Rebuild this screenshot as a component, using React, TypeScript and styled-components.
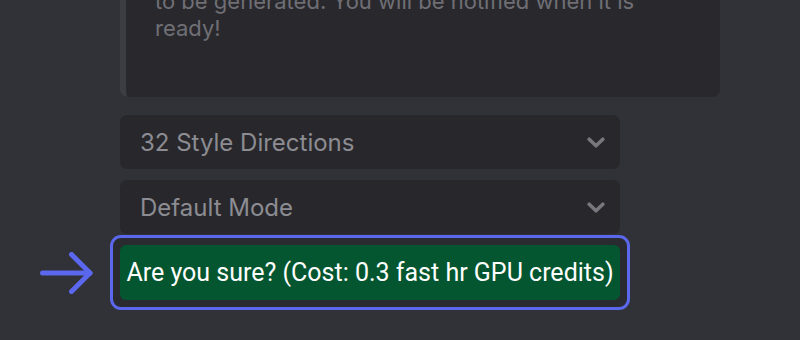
import React from "react";
import styled, { createGlobalStyle } from "styled-components";

const Global = createGlobalStyle`
  html, body {
    margin: 0;
    padding: 0;
    background: #313238;
    overflow: hidden;
  }
  body {
    width: 800px;
    height: 340px;
    font-family: Inter, "Noto Sans", sans-serif;
  }
`;

const Page = styled.div`
  width: 800px;
  height: 340px;
  overflow: hidden;
  background: #313238;
`;

const Column = styled.div`
  margin-left: 120px;
  width: 600px;
  display: flex;
  flex-direction: column;
`;

const NoticePanel = styled.div`
  margin-top: -28px;
  box-sizing: border-box;
  width: 600px;
  padding: 16px 40px 55px 29px;
  background: #29292d;
  border-left: 6px solid #3b3d43;
  border-radius: 0 0 8px 8px;
  color: #6f6f75;
  font-size: 22px;
  line-height: 27px;
`;

const Select = styled.div`
  margin-top: ${(p: { $gap: number }) => p.$gap}px;
  box-sizing: border-box;
  width: 500px;
  height: 54px;
  padding: 0 15px 0 20px;
  display: flex;
  align-items: center;
  justify-content: space-between;
  background: #28282c;
  border-radius: 7px;
  color: #8c8c92;
  font-size: 24px;
`;

const ConfirmRow = styled.div`
  margin-top: 1px;
  margin-left: -80px;
  display: flex;
  align-items: center;
  gap: 17px;
`;

const FocusFrame = styled.div`
  padding: 7px;
  border: 3px solid #5b67ec;
  border-radius: 11px;
  background: #2a2b30;
`;

const ConfirmButton = styled.button`
  box-sizing: border-box;
  width: 500px;
  height: 55px;
  border: none;
  border-radius: 6px;
  background: #03562f;
  color: #ffffff;
  font-family: Roboto, "Liberation Sans", sans-serif;
  font-size: 25px;
  padding: 0;
  display: flex;
  align-items: center;
  justify-content: center;
`;

const Chevron = () => (
  <svg width="18" height="11" viewBox="0 0 18 11">
    <polyline
      points="2.2,2.2 9,8.8 15.8,2.2"
      fill="none"
      stroke="#77777d"
      strokeWidth="3.6"
      strokeLinecap="round"
      strokeLinejoin="round"
    />
  </svg>
);

const Arrow = () => (
  <svg width="53" height="42" viewBox="0 0 53 42">
    <g fill="none" stroke="#5b67ec" strokeWidth="5" strokeLinecap="round" strokeLinejoin="round">
      <line x1="2.5" y1="21" x2="50" y2="21" />
      <polyline points="31.5,2.5 50,21 31.5,39.5" />
    </g>
  </svg>
);

export default function App() {
  return (
    <Page>
      <Global />
      <Column>
        <NoticePanel>
          to be generated. You will be notified when it is ready!
        </NoticePanel>
        <Select $gap={18}>
          <span>32 Style Directions</span>
          <Chevron />
        </Select>
        <Select $gap={11}>
          <span>Default Mode</span>
          <Chevron />
        </Select>
        <ConfirmRow>
          <Arrow />
          <FocusFrame>
            <ConfirmButton>Are you sure? (Cost: 0.3 fast hr GPU credits)</ConfirmButton>
          </FocusFrame>
        </ConfirmRow>
      </Column>
    </Page>
  );
}
